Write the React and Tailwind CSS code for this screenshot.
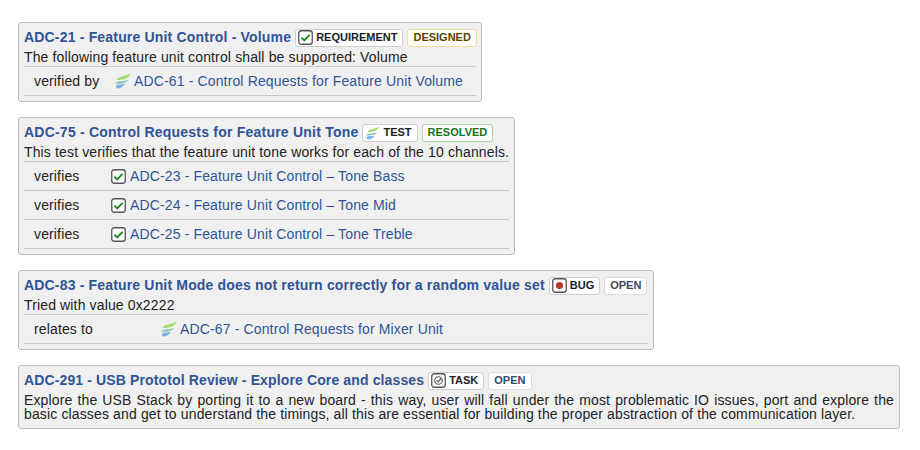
const font = { fontFamily: '"Liberation Sans", Arial, sans-serif' };

function CheckIcon({ size = 15 }) {
  return (
    <svg width={size} height={size} viewBox="0 0 15 15" className="shrink-0">
      <rect x="0.75" y="0.75" width="13.5" height="13.5" rx="2.5" fill="#fff" stroke="#555" strokeWidth="1.3" />
      <path d="M3.4 7.6 L6.2 10.4 L11.6 4.8" fill="none" stroke="#1e8a1e" strokeWidth="1.9" />
    </svg>
  );
}

function TestIcon({ width = 17, height = 16 }) {
  return (
    <svg width={width} height={height} viewBox="0 0 17 16" className="shrink-0">
      <path d="M2.5 7 C5 2.5 11 4 16.5 0.5 C15.5 4.5 11 7 2.5 7 Z" fill="#a0de6c" />
      <path d="M0.5 10.6 C4 7.6 9 8.8 14 7 C12.5 10 7 11.2 0.5 10.6 Z" fill="#86c4b4" />
      <path d="M2 12.5 C5 11 8 12 11 10.8 C9.5 14 6 15.6 3 15.5 C2.2 14.8 2 13.6 2 12.5 Z" fill="#76b2e4" />
    </svg>
  );
}

function BugIcon() {
  return (
    <svg width="15" height="15" viewBox="0 0 15 15" className="shrink-0">
      <rect x="0.75" y="0.75" width="13.5" height="13.5" rx="2.5" fill="#fff" stroke="#555" strokeWidth="1.3" />
      <circle cx="7.5" cy="7.5" r="3.6" fill="#b5382e" />
    </svg>
  );
}

function TaskIcon() {
  return (
    <svg width="15" height="15" viewBox="0 0 15 15" className="shrink-0">
      <rect x="0.75" y="0.75" width="13.5" height="13.5" rx="2.5" fill="#fff" stroke="#555" strokeWidth="1.3" />
      <circle cx="7.5" cy="7.5" r="3.8" fill="none" stroke="#555" strokeWidth="1.1" />
      <path d="M5.6 7.3 L7.2 8.9 L10 5.5" fill="none" stroke="#555" strokeWidth="1.2" />
    </svg>
  );
}

function TypeBadge({ icon, label }) {
  return (
    <span className="flex h-[18px] items-center gap-[3px] rounded-[3px] border border-[#cfcfcf] bg-white pl-[2px] pr-[5px] text-[11px] font-bold leading-none tracking-normal text-[#1c1c1c]">
      {icon}
      {label}
    </span>
  );
}

function StatusBadge({ label, className }) {
  return (
    <span className={`flex h-[18px] items-center rounded-[3px] border px-[5px] text-[11px] font-bold leading-none tracking-normal ${className}`}>
      {label}
    </span>
  );
}

function Row({ label, labelWidth, icon, text }) {
  return (
    <div className="flex h-[29px] items-center border-b border-[#c8c8c8] pl-[10px]">
      <span className={`shrink-0 text-[#222] ${labelWidth}`}>{label}</span>
      <span className="mr-[4px] flex w-[16px] shrink-0 justify-center">{icon}</span>
      <a className="text-[#2f5597]">{text}</a>
    </div>
  );
}

function Card({ title, titleClass, badges, children, className = '' }) {
  return (
    <div className={`rounded-[3px] border border-[#bdbdbd] bg-[#f0f0f0] px-[5px] ${className}`}>
      <div className="flex h-[25px] items-center gap-[4px] pt-[4px]">
        <a className={`mb-[2px] whitespace-nowrap font-bold text-[#2f5597] ${titleClass}`}>{title}</a>
        {badges}
      </div>
      {children}
    </div>
  );
}

export default function App() {
  return (
    <div className="flex min-h-[450px] flex-col items-start gap-[15px] bg-white pl-[18px] pr-[20px] pt-[22px] text-[14px] leading-[16px] tracking-[0.14px] text-[#222]" style={font}>
      <Card
        className="h-[80px] w-[464px]"
        titleClass="tracking-[0.18px]"
        title="ADC-21 - Feature Unit Control - Volume"
        badges={
          <>
            <TypeBadge icon={<CheckIcon />} label="REQUIREMENT" />
            <StatusBadge label="DESIGNED" className="border-[#f5dc9a] bg-white text-[#594300]" />
          </>
        }
      >
        <div className="flex h-[19px] items-center whitespace-nowrap border-b border-[#c8c8c8]">The following feature unit control shall be supported: Volume</div>
        <Row label="verified by" labelWidth="w-[80px]" icon={<TestIcon />} text="ADC-61 - Control Requests for Feature Unit Volume" />
      </Card>

      <Card
        className="h-[138px] w-[497px]"
        titleClass="tracking-[0.22px]"
        title="ADC-75 - Control Requests for Feature Unit Tone"
        badges={
          <>
            <TypeBadge icon={<TestIcon width={15} height={14} />} label="TEST" />
            <StatusBadge label="RESOLVED" className="border-[#a5d6a0] bg-white text-[#14721a]" />
          </>
        }
      >
        <div className="flex h-[19px] items-center whitespace-nowrap border-b border-[#c8c8c8]">This test verifies that the feature unit tone works for each of the 10 channels.</div>
        <Row label="verifies" labelWidth="w-[76px]" icon={<CheckIcon />} text="ADC-23 - Feature Unit Control – Tone Bass" />
        <Row label="verifies" labelWidth="w-[76px]" icon={<CheckIcon />} text="ADC-24 - Feature Unit Control – Tone Mid" />
        <Row label="verifies" labelWidth="w-[76px]" icon={<CheckIcon />} text="ADC-25 - Feature Unit Control – Tone Treble" />
      </Card>

      <Card
        className="h-[80px] w-[636px]"
        titleClass="tracking-[0.17px]"
        title="ADC-83 - Feature Unit Mode does not return correctly for a random value set"
        badges={
          <>
            <TypeBadge icon={<BugIcon />} label="BUG" />
            <StatusBadge label="OPEN" className="border-[#dcdcdc] bg-white text-[#3b4a5c]" />
          </>
        }
      >
        <div className="flex h-[19px] items-center whitespace-nowrap border-b border-[#c8c8c8]">Tried with value 0x2222</div>
        <Row label="relates to" labelWidth="w-[126px]" icon={<TestIcon />} text="ADC-67 - Control Requests for Mixer Unit" />
      </Card>

      <Card
        className="h-[64px] w-[882px]"
        titleClass="tracking-[0.13px]"
        title="ADC-291 - USB Prototol Review - Explore Core and classes"
        badges={
          <>
            <TypeBadge icon={<TaskIcon />} label="TASK" />
            <StatusBadge label="OPEN" className="border-[#dcdcdc] bg-white text-[#3b4a5c]" />
          </>
        }
      >
        <p className="pt-[2px] text-justify leading-[14px]">
          Explore the USB Stack by porting it to a new board - this way, user will fall under the most problematic IO issues, port and explore the basic classes and get to understand the timings, all this are essential for building the proper abstraction of the communication layer.
        </p>
      </Card>
    </div>
  );
}
